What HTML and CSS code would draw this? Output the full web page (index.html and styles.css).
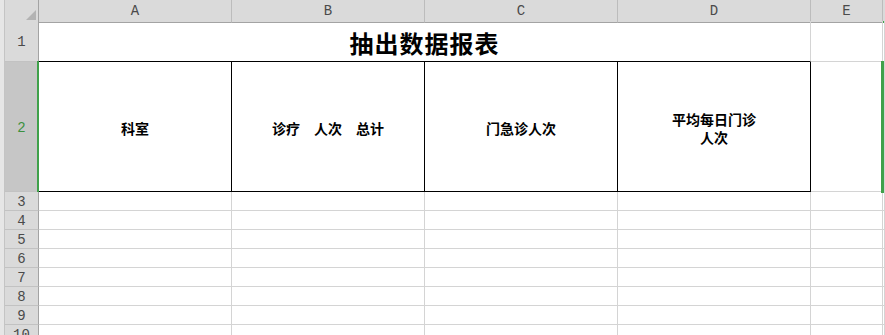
FILE: index.html
```html
<!DOCTYPE html>
<html lang="zh-CN">
<head>
    <meta charset="UTF-8">
    <meta name="viewport" content="width=device-width, initial-scale=1.0">
    <title>抽出数据报表</title>
    <link rel="stylesheet" href="styles.css">
</head>
<body>
    <div class="sheet">
        <!-- thin strip on the far left -->
        <div class="edge"></div>

        <div class="grid">
            <!-- Column headers -->
            <div class="row head-row">
                <div class="corner"><span class="corner-mark"></span></div>
                <div class="col-head">A</div>
                <div class="col-head">B</div>
                <div class="col-head">C</div>
                <div class="col-head">D</div>
                <div class="col-head">E</div>
                <div class="col-head col-f"></div>
            </div>

            <!-- Row 1: title merged over A-D -->
            <div class="row row-1">
                <div class="row-head">1</div>
                <div class="cell title">抽出数据报表</div>
                <div class="cell"></div>
                <div class="cell"></div>
            </div>

            <!-- Row 2: table header (selected row) -->
            <div class="row row-2">
                <div class="row-head selected">2</div>
                <div class="cell boxed">科室</div>
                <div class="cell boxed">诊疗　人次　总计</div>
                <div class="cell boxed">门急诊人次</div>
                <div class="cell boxed">平均每日门诊<br>人次</div>
                <div class="cell"></div>
                <div class="cell"></div>
                <span class="sel-left"></span>
                <span class="sel-right"></span>
            </div>

            <!-- Empty rows -->
            <div class="row"><div class="row-head">3</div><div class="cell"></div><div class="cell"></div><div class="cell"></div><div class="cell"></div><div class="cell"></div><div class="cell"></div></div>
            <div class="row"><div class="row-head">4</div><div class="cell"></div><div class="cell"></div><div class="cell"></div><div class="cell"></div><div class="cell"></div><div class="cell"></div></div>
            <div class="row"><div class="row-head">5</div><div class="cell"></div><div class="cell"></div><div class="cell"></div><div class="cell"></div><div class="cell"></div><div class="cell"></div></div>
            <div class="row"><div class="row-head">6</div><div class="cell"></div><div class="cell"></div><div class="cell"></div><div class="cell"></div><div class="cell"></div><div class="cell"></div></div>
            <div class="row"><div class="row-head">7</div><div class="cell"></div><div class="cell"></div><div class="cell"></div><div class="cell"></div><div class="cell"></div><div class="cell"></div></div>
            <div class="row"><div class="row-head">8</div><div class="cell"></div><div class="cell"></div><div class="cell"></div><div class="cell"></div><div class="cell"></div><div class="cell"></div></div>
            <div class="row"><div class="row-head">9</div><div class="cell"></div><div class="cell"></div><div class="cell"></div><div class="cell"></div><div class="cell"></div><div class="cell"></div></div>
            <div class="row"><div class="row-head">10</div><div class="cell"></div><div class="cell"></div><div class="cell"></div><div class="cell"></div><div class="cell"></div><div class="cell"></div></div>
        </div>
    </div>
</body>
</html>
```

FILE: styles.css
```css
/* Reset and base styles */
* {
    box-sizing: border-box;
    margin: 0;
    padding: 0;
}

body {
    background: #fff;
    overflow: hidden;
    font-family: "Noto Sans CJK SC", sans-serif;
}

/* Sheet layout */
.sheet {
    display: flex;
    height: 335px;
    overflow: hidden;
}

.edge {
    width: 5px;
    flex: none;
    background: #e6e6e6;
    border-right: 1px solid #c4c4c4;
}

.grid {
    flex: 1;
}

.row {
    display: grid;
    grid-template-columns: 34px 193px 193px 193px 193px 72px 1fr;
    height: 19px;
}

.head-row {
    height: 21px;
}

.row-1 {
    height: 41px;
}

.row-2 {
    height: 130px;
    position: relative;
}

/* Column headers */
.corner {
    display: flex;
    justify-content: flex-end;
    align-items: flex-end;
    padding: 0 2px 2px 0;
    background: #dadada;
    border-right: 1px solid #a3a3a3;
    border-bottom: 1px solid #a3a3a3;
}

.corner-mark {
    width: 0;
    height: 0;
    border-left: 10px solid transparent;
    border-bottom: 10px solid #b3b3b3;
}

.col-head {
    background: #dadada;
    border-right: 1px solid #bcbcbc;
    border-bottom: 1px solid #a3a3a3;
    font-family: "Liberation Mono", monospace;
    font-size: 14px;
    color: #4a4a4a;
    text-align: center;
    line-height: 22px;
}

.col-head.col-f {
    border-right: none;
    border-bottom: 2px solid #3fa14a;
}

/* Row headers */
.row-head {
    background: #dadada;
    border-right: 1px solid #a3a3a3;
    border-bottom: 1px solid #c2c2c2;
    font-family: "Liberation Mono", monospace;
    font-size: 14px;
    color: #4a4a4a;
    display: flex;
    align-items: center;
    justify-content: center;
    padding-top: 2px;
}

.row-head.selected {
    background: #c6c6c6;
    color: #3b913f;
}

/* Cells */
.cell {
    border-right: 1px solid #d4d4d4;
    border-bottom: 1px solid #d4d4d4;
}

.title {
    grid-column: span 4;
    display: flex;
    align-items: center;
    justify-content: center;
    font-size: 24px;
    font-weight: 700;
    letter-spacing: 1px;
    color: #000;
    border-bottom-color: #000;
    padding-top: 2px;
}

.boxed {
    display: flex;
    align-items: center;
    justify-content: center;
    text-align: center;
    font-size: 14px;
    font-weight: 700;
    line-height: 18px;
    color: #000;
    border-right-color: #000;
    border-bottom-color: #000;
    padding-top: 3px;
}

/* Selection outline drawn over the row */
.sel-left {
    position: absolute;
    left: 32px;
    top: -1px;
    bottom: 0;
    width: 2px;
    background: #3fa14a;
}

.sel-right {
    position: absolute;
    left: 876px;
    top: -1px;
    bottom: -1px;
    width: 3px;
    background: #3fa14a;
}
```
